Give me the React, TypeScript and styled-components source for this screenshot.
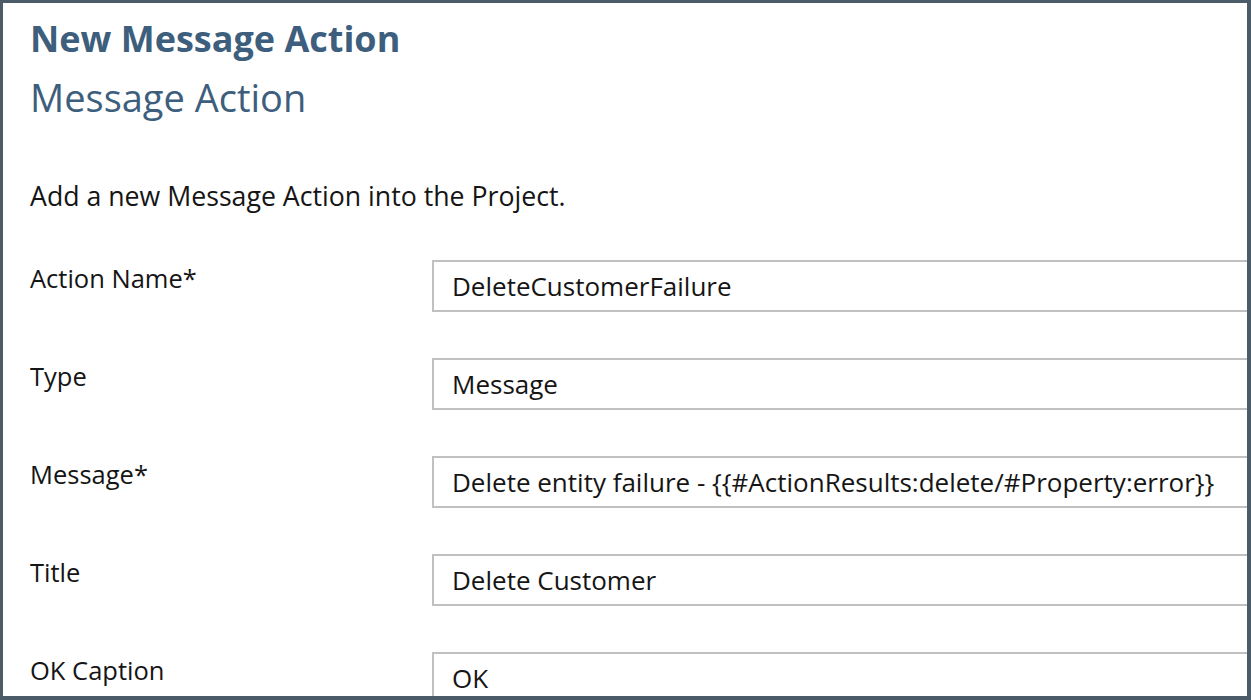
import React from "react";
import styled, { createGlobalStyle } from "styled-components";

const Global = createGlobalStyle`
  html, body {
    margin: 0;
    padding: 0;
    background: #ffffff;
  }
  body {
    font-family: "Open Sans", "Noto Sans", sans-serif;
  }
`;

const Frame = styled.div`
  box-sizing: border-box;
  width: 1251px;
  height: 700px;
  border-style: solid;
  border-color: #4b5b68;
  border-width: 3px 4px 4px 3px;
  overflow: hidden;
  padding: 10px 0 0 27px;
  background: #fff;
`;

const Title = styled.h1`
  margin: 0;
  font-size: 36px;
  line-height: 52px;
  font-weight: 700;
  color: #3d5e7c;
`;

const Subtitle = styled.h2`
  margin: 0;
  font-size: 38px;
  line-height: 64px;
  font-weight: 400;
  color: #3d5e7c;
`;

const Intro = styled.p`
  margin: 50px 0 0;
  font-size: 26.7px;
  line-height: 34px;
  color: #151515;
`;

const Form = styled.div`
  margin-top: 47px;
  display: grid;
  grid-template-columns: 402px 1fr;
  row-gap: 46px;
`;

const Label = styled.label`
  font-size: 25.5px;
  line-height: 32px;
  padding-top: 2px;
  color: #151515;
`;

const Field = styled.div`
  box-sizing: border-box;
  height: 52px;
  width: calc(100% + 20px);
  border: 2px solid #c0c0c0;
  padding: 0 18px;
  display: flex;
  align-items: center;
  font-size: 26px;
  color: #151515;
  white-space: nowrap;
`;

const fields = [
  { label: "Action Name*", value: "DeleteCustomerFailure" },
  { label: "Type", value: "Message" },
  { label: "Message*", value: "Delete entity failure - {{#ActionResults:delete/#Property:error}}" },
  { label: "Title", value: "Delete Customer" },
  { label: "OK Caption", value: "OK" },
];

export default function App() {
  return (
    <>
      <Global />
      <Frame>
        <Title>New Message Action</Title>
        <Subtitle>Message Action</Subtitle>
        <Intro>Add a new Message Action into the Project.</Intro>
        <Form>
          {fields.map((f) => (
            <React.Fragment key={f.label}>
              <Label>{f.label}</Label>
              <Field>{f.value}</Field>
            </React.Fragment>
          ))}
        </Form>
      </Frame>
    </>
  );
}
